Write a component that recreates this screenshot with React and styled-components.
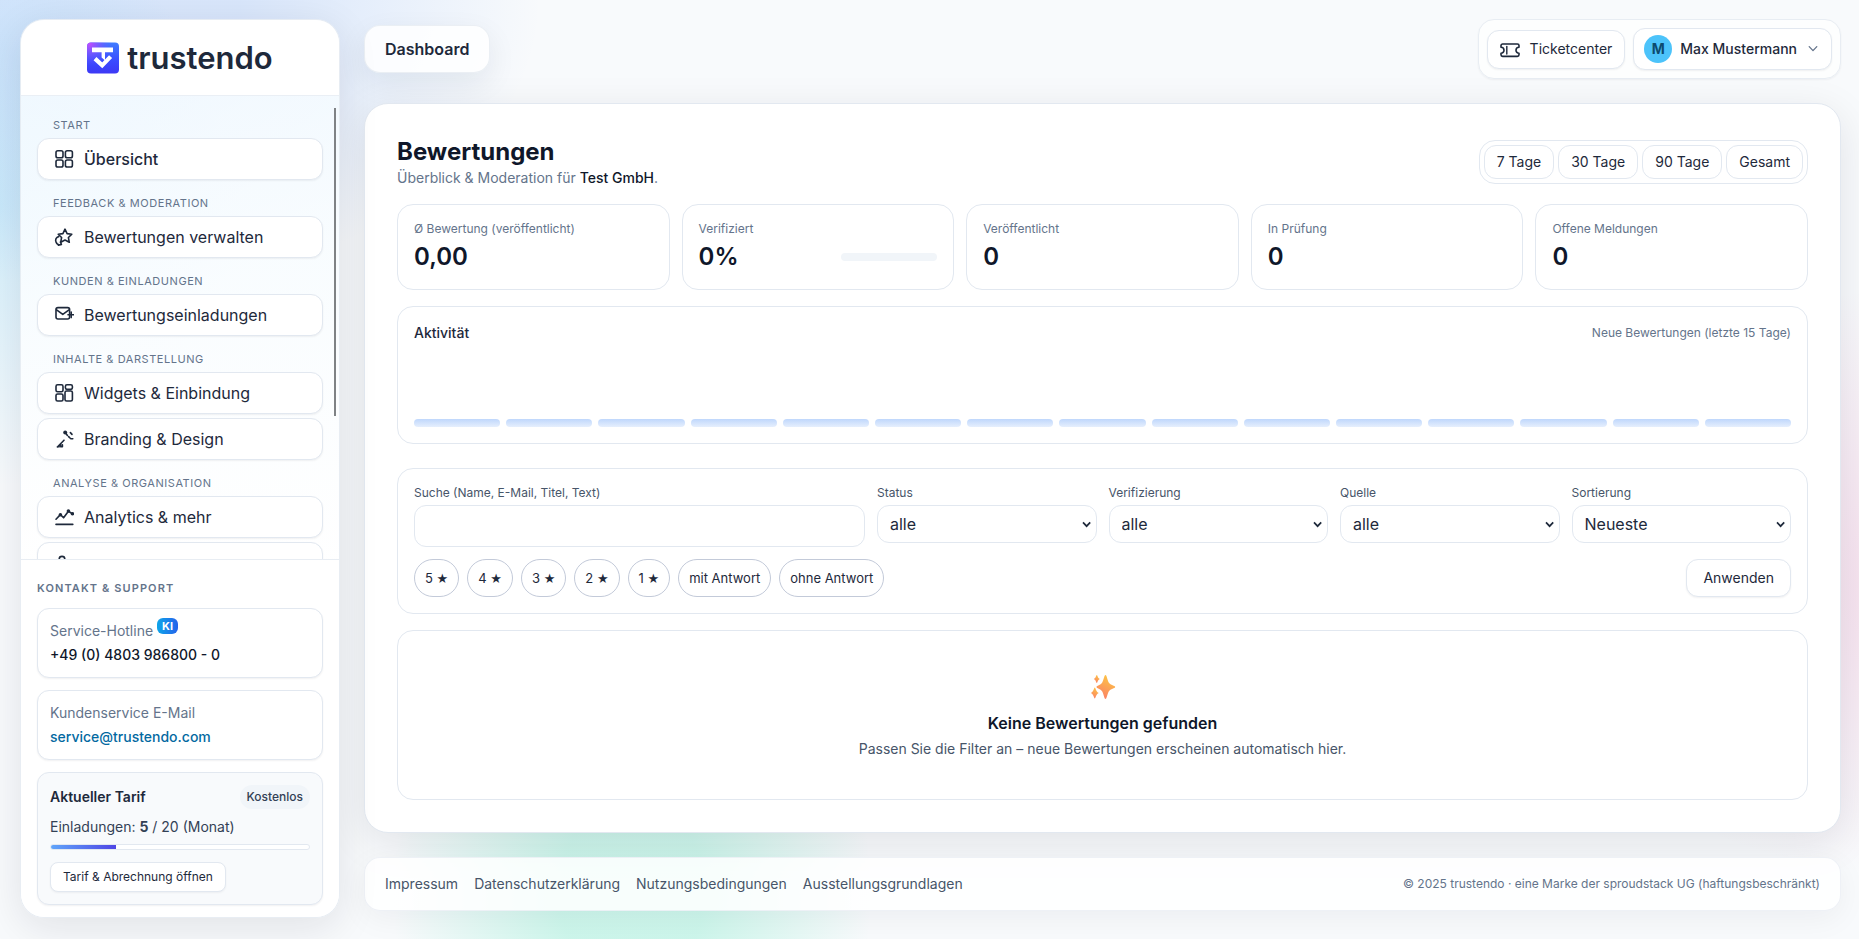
import React from "react";
import styled, { createGlobalStyle } from "styled-components";

const GlobalStyle = createGlobalStyle`
  *, *::before, *::after { box-sizing: border-box; }
  body {
    margin: 0;
    min-height: 100vh;
    font-family: Inter, "Liberation Sans", sans-serif;
    font-size: 14px;
    line-height: 20px;
    color: #1e293b;
    background:
      radial-gradient(ellipse 240px 280px at 0% 22%, rgba(56, 189, 248, 0.2), transparent 100%),
      radial-gradient(ellipse 430px 290px at 6% 0%, rgba(59, 130, 246, 0.17) 30%, transparent 100%),
      radial-gradient(ellipse 240px 310px at 34% 95%, rgba(16, 225, 160, 0.19) 30%, transparent 100%),
      radial-gradient(ellipse 480px 330px at 104% 62%, rgba(236, 72, 153, 0.15), transparent 90%),
      #f8fafc;
    background-attachment: fixed;
  }
  button, input, select { font: inherit; color: inherit; margin: 0; }
  a { color: inherit; text-decoration: none; }
  h1, h2, h3, p, ul { margin: 0; padding: 0; }
`;

const line = "#e2e8f0";

const Shell = styled.div`
  display: grid;
  grid-template-columns: 320px minmax(0, 1fr);
  gap: 24px;
  align-items: start;
  padding: 19px 18px 0 20px;
`;

const Sidebar = styled.aside`
  position: sticky;
  top: 19px;
  display: flex;
  flex-direction: column;
  height: calc(100vh - 40px);
  overflow: hidden;
  border: 1px solid rgba(226, 232, 240, 0.8);
  border-radius: 24px;
  background: rgba(255, 255, 255, 0.72);
  box-shadow: 0 10px 40px rgba(15, 23, 42, 0.1);
`;

const Brand = styled.a`
  display: flex;
  align-items: center;
  justify-content: center;
  gap: 8px;
  flex: none;
  height: 76px;
  border-bottom: 1px solid #eaeff5;
  background: rgba(255, 255, 255, 0.94);
  font-size: 31px;
  line-height: 40px;
  font-weight: 600;
  color: #1e293b;
`;

const NavWrap = styled.div`
  position: relative;
  display: flex;
  flex: 1;
  min-height: 0;
  background: linear-gradient(rgba(240, 249, 255, 0.6), rgba(255, 255, 255, 0.85));
`;

const Nav = styled.nav`
  flex: 1;
  overflow-y: auto;
  scrollbar-width: none;
  padding: 20px 16px;
`;

const ScrollThumb = styled.span`
  position: absolute;
  top: 12px;
  right: 3px;
  width: 2px;
  height: 308px;
  background: #7f8285;
`;

const NavGroup = styled.div`
  display: flex;
  flex-direction: column;
  gap: 4px;
  margin-bottom: 14px;
`;

const NavCaption = styled.h2`
  padding-left: 16px;
  font-size: 11px;
  line-height: 18px;
  font-weight: 400;
  letter-spacing: 0.05em;
  text-transform: uppercase;
  color: #64748b;
`;

const NavItem = styled.a`
  display: flex;
  align-items: center;
  gap: 10px;
  height: 42px;
  flex: none;
  padding: 0 16px;
  border: 1px solid ${line};
  border-radius: 12px;
  background: #fff;
  box-shadow: 0 1px 2px rgba(15, 23, 42, 0.06);
  font-size: 16px;
  line-height: 24px;
  font-weight: ${(p) => (p.$active ? 500 : 400)};
`;

const SideFoot = styled.div`
  display: flex;
  flex-direction: column;
  gap: 12px;
  flex: none;
  padding: 20px 16px 12px;
  border-top: 1px solid #e8edf3;
  background: rgba(255, 255, 255, 0.94);
`;

const FootCaption = styled.h2`
  font-size: 11px;
  line-height: 16px;
  font-weight: 600;
  letter-spacing: 0.1em;
  text-transform: uppercase;
  color: #64748b;
`;

const SideCard = styled.section`
  display: flex;
  flex-direction: column;
  gap: 4px;
  padding: 12px;
  border: 1px solid ${line};
  border-radius: 12px;
  background: ${(p) => (p.$tinted ? "#f8fafc" : "#fff")};
  box-shadow: 0 1px 2px rgba(15, 23, 42, 0.06);
`;

const CardLabel = styled.p`
  color: #64748b;
`;

const CardLink = styled.a`
  font-weight: 500;
  color: ${(p) => (p.$accent ? "#0369a1" : "#0f172a")};
`;

const KiBadge = styled.sup`
  padding: 1px 5px;
  border-radius: 6px;
  background: linear-gradient(90deg, #0ea5e9, #2563eb);
  font-size: 11px;
  line-height: 0;
  font-weight: 700;
  color: #fff;
`;

const PlanHead = styled.div`
  display: flex;
  align-items: center;
  justify-content: space-between;
  height: 24px;
`;

const PlanTitle = styled.h3`
  font-size: 14px;
  font-weight: 600;
`;

const PlanBadge = styled.span`
  padding: 4px 7px;
  border-radius: 12px;
  background: #f1f5f9;
  font-size: 12px;
  line-height: 16px;
  font-weight: 500;
  color: #334155;
`;

const PlanUsage = styled.p`
  padding: 4px 0 3px;
  color: #334155;
`;

const Meter = styled.div`
  height: 6px;
  overflow: hidden;
  border: 1px solid ${line};
  border-radius: 3px;
  background: #fff;
`;

const MeterFill = styled.div`
  height: 100%;
  background: linear-gradient(90deg, #60a5fa, #4f46e5);
`;

const PlanButton = styled.button`
  align-self: flex-start;
  height: 30px;
  margin-top: 8px;
  padding: 0 12px;
  border: 1px solid ${line};
  border-radius: 8px;
  background: #fff;
  box-shadow: 0 1px 2px rgba(15, 23, 42, 0.05);
  font-size: 12px;
`;

const Column = styled.div`
  display: flex;
  flex-direction: column;
  gap: 24px;
  min-width: 0;
`;

const TopBar = styled.header`
  display: flex;
  align-items: center;
  justify-content: space-between;
`;

const PageTag = styled.div`
  padding: 11px 20px;
  border: 1px solid rgba(226, 232, 240, 0.7);
  border-radius: 16px;
  background: rgba(255, 255, 255, 0.85);
  box-shadow: 0 10px 30px rgba(15, 23, 42, 0.07);
  font-size: 16px;
  line-height: 24px;
  font-weight: 600;
`;

const TopActions = styled.div`
  display: flex;
  align-items: center;
  gap: 8px;
  height: 60px;
  padding: 0 8px;
  border: 1px solid #e8edf3;
  border-radius: 16px;
  background: rgba(255, 255, 255, 0.7);
  box-shadow: 0 1px 2px rgba(15, 23, 42, 0.05);
`;

const TopButton = styled.button`
  display: flex;
  align-items: center;
  gap: ${(p) => (p.$user ? 8 : 10)}px;
  height: ${(p) => (p.$user ? 42 : 39)}px;
  padding: 0 ${(p) => (p.$user ? 10 : 12)}px;
  border: 1px solid ${line};
  border-radius: 12px;
  background: #fff;
  box-shadow: 0 1px 2px rgba(15, 23, 42, 0.06);
  font-weight: ${(p) => (p.$user ? 500 : 400)};
`;

const Avatar = styled.span`
  width: 28px;
  height: 28px;
  border-radius: 50%;
  background: #4cc3fa;
  line-height: 28px;
  font-weight: 700;
  text-align: center;
  color: #0c4a6e;
`;

const ChevronBox = styled.span`
  display: flex;
  padding: 0 2px;
`;

const Panel = styled.main`
  padding: 32px;
  border: 1px solid ${line};
  border-radius: 24px;
  background: #fff;
  box-shadow: 0 10px 40px rgba(15, 23, 42, 0.1);
`;

const PanelHead = styled.div`
  display: flex;
  align-items: center;
  justify-content: space-between;
  margin-bottom: 16px;
`;

const Title = styled.h1`
  font-size: 24px;
  line-height: 32px;
  font-weight: 700;
  color: #0f172a;
`;

const Subtitle = styled.p`
  color: #64748b;
  strong { font-weight: 500; color: #0f172a; }
`;

const RangeGroup = styled.div`
  display: flex;
  gap: 4px;
  padding: 4px;
  border: 1px solid ${line};
  border-radius: 16px;
`;

const RangeButton = styled.button`
  height: 34px;
  padding: 0 12px;
  border: 1px solid ${line};
  border-radius: 12px;
  background: #fff;
`;

const Card = styled.section`
  padding: 16px;
  border: 1px solid ${line};
  border-radius: 16px;
  background: #fff;
`;

const KpiGrid = styled.div`
  display: grid;
  grid-template-columns: repeat(5, minmax(0, 1fr));
  gap: 12px;
  margin-bottom: 16px;
`;

const KpiLabel = styled.p`
  margin-bottom: 4px;
  font-size: 12px;
  line-height: 16px;
  color: #64748b;
`;

const KpiRow = styled.div`
  display: flex;
  align-items: center;
  justify-content: space-between;
`;

const KpiValue = styled.p`
  font-size: 24px;
  line-height: 32px;
  font-weight: 600;
  color: #0f172a;
`;

const KpiTrack = styled.div`
  width: 96px;
  height: 8px;
  border-radius: 4px;
  background: #f1f5f9;
`;

const ActivityCard = styled(Card)`
  margin-bottom: 24px;
`;

const ActivityHead = styled.div`
  display: flex;
  align-items: center;
  justify-content: space-between;
  margin-bottom: 12px;
`;

const ActivityTitle = styled.h2`
  font-size: 14px;
  font-weight: 500;
`;

const Hint = styled.span`
  font-size: 12px;
  line-height: 16px;
  color: #64748b;
`;

const Bars = styled.div`
  display: flex;
  align-items: flex-end;
  gap: 6px;
  height: 72px;
`;

const Bar = styled.div`
  flex: 1;
  height: 8px;
  border-radius: 4px;
  background: linear-gradient(#bfd7fc, #e6effd);
`;

const FilterForm = styled.form`
  display: flex;
  flex-direction: column;
  gap: 12px;
  margin-bottom: 16px;
  padding: 16px;
  border: 1px solid ${line};
  border-radius: 16px;
`;

const FieldGrid = styled.div`
  display: grid;
  grid-template-columns: repeat(12, minmax(0, 1fr));
  gap: 12px;
`;

const Field = styled.label`
  display: flex;
  flex-direction: column;
  gap: 4px;
  grid-column: span ${(p) => p.$span};
  font-size: 12px;
  line-height: 16px;
  color: #475569;
`;

const TextInput = styled.input`
  width: 100%;
  height: 42px;
  padding: 8px 12px;
  border: 1px solid ${line};
  border-radius: 12px;
  background: #fff;
  font-size: 16px;
  color: #1e293b;
`;

const SelectBox = styled.span`
  position: relative;
  display: block;
  svg {
    position: absolute;
    top: 13px;
    right: 4px;
    pointer-events: none;
  }
`;

const Select = styled.select`
  appearance: none;
  display: block;
  width: 100%;
  height: 38px;
  padding: 0 20px 0 12px;
  border: 1px solid ${line};
  border-radius: 12px;
  background: #fff;
  font-size: 16px;
  line-height: 24px;
  color: #1e293b;
`;

const ChipRow = styled.div`
  display: flex;
  align-items: center;
  gap: 8px;
`;

const Chip = styled.button`
  height: 38px;
  padding: 0 10px;
  border: 1px solid #c3cad9;
  border-radius: 19px;
  background: #fff;
  font-size: 13px;
`;

const Star = styled.span`
  font-family: "DejaVu Sans", sans-serif;
  font-size: 13px;
  line-height: 1;
`;

const ApplyButton = styled.button`
  height: 38px;
  margin-left: auto;
  padding: 0 16px;
  border: 1px solid ${line};
  border-radius: 12px;
  background: #fff;
  box-shadow: 0 1px 2px rgba(15, 23, 42, 0.06);
`;

const EmptyCard = styled(Card)`
  display: flex;
  flex-direction: column;
  align-items: center;
  padding: 40px 16px;
  text-align: center;
`;

const EmptyTitle = styled.h2`
  margin: 8px 0 4px;
  font-size: 16px;
  line-height: 24px;
  font-weight: 600;
  color: #0f172a;
`;

const EmptyText = styled.p`
  color: #475569;
`;

const Footer = styled.footer`
  display: flex;
  align-items: center;
  justify-content: space-between;
  min-height: 54px;
  padding: 0 20px;
  border: 1px solid rgba(226, 232, 240, 0.6);
  border-radius: 16px;
  background: rgba(255, 255, 255, 0.85);
  box-shadow: 0 8px 30px rgba(15, 23, 42, 0.05);
`;

const FooterLinks = styled.nav`
  display: flex;
  gap: 16px;
  color: #475569;
`;

const Svg = ({ size = 20, children, ...rest }) => (
  <svg
    width={size}
    height={size}
    viewBox="0 0 20 20"
    fill="none"
    stroke="currentColor"
    strokeWidth="1.6"
    strokeLinecap="round"
    strokeLinejoin="round"
    aria-hidden="true"
    {...rest}
  >
    {children}
  </svg>
);

const GridIcon = () => (
  <Svg>
    <rect x="2" y="1.8" width="7" height="7" rx="1.8" />
    <rect x="11.4" y="1.8" width="7" height="7" rx="1.8" />
    <rect x="2" y="11" width="7" height="7" rx="1.8" />
    <rect x="11.4" y="11" width="7" height="7" rx="1.8" />
  </Svg>
);

const StarIcon = () => (
  <Svg>
    <path d="M11 2.2l2.1 4.4 4.7.6-3.4 3.3.9 4.8-4.3-2.3-4.3 2.3.9-4.8L4.2 7.2l4.7-.6z" />
    <path d="M4.600 9.600C2.200 10.200 1 12.600 2 15c.9 2.200 3 3.200 5.200 2.400M4.400 18.200l3-.8-1-2.400" />
  </Svg>
);

const MailIcon = () => (
  <Svg>
    <rect x="2" y="2.600" width="13.600" height="11.400" rx="2" />
    <path d="M2.600 4.800l6.200 4.600L15 4.800M14 9.800h6M17.200 7v5.600" />
  </Svg>
);

const WidgetIcon = () => (
  <Svg>
    <rect x="2" y="1.800" width="7" height="7" rx="1.600" />
    <rect x="11.400" y="1.800" width="7" height="4.600" rx="1.600" />
    <rect x="2" y="11" width="7" height="7" rx="1.600" />
    <rect x="11" y="8" width="7.400" height="10" rx="1.600" />
  </Svg>
);

const BrandingIcon = () => (
  <Svg>
    <circle cx="11.200" cy="3.400" r="2" fill="currentColor" stroke="none" />
    <path d="M3.400 18l6.600-6.800M3.400 17.800h1.800M6.600 15.200v2.600h1.800v-2M12 4.600l1.400 1.800M14.600 7.600l1.400 1.400M16.400 3.600l1.600 1.800M16.800 9.800h2" />
  </Svg>
);

const ChartIcon = () => (
  <Svg>
    <path d="M2 12.200l4.400-4.600 3.200 3.200 4.800-6.600 3.800 2.400M2 17.400h16.800" />
    <circle cx="6.400" cy="7.800" r="1" fill="currentColor" />
    <circle cx="14.400" cy="4" r="1" fill="currentColor" />
    <circle cx="18.400" cy="6.800" r="1" fill="currentColor" />
  </Svg>
);

const TeamIcon = () => (
  <Svg>
    <circle cx="8" cy="6.200" r="2.800" />
    <path d="M2.400 17.600c0-3.600 2.400-5.600 5.600-5.600s5.600 2 5.600 5.600" />
  </Svg>
);

const TicketIcon = () => (
  <Svg>
    <path d="M2.600 5h14.800a1.600 1.600 0 0 1 1.600 1.600v1.600a3 3 0 0 0 0 6v1.600a1.600 1.600 0 0 1-1.600 1.600H2.600A1.600 1.600 0 0 1 1 15.800v-1.600a3 3 0 0 0 0-6V6.600A1.600 1.600 0 0 1 2.600 5z" />
    <path d="M6.800 7.400v7.600" strokeWidth="1.400" />
  </Svg>
);

const Chevron = () => (
  <svg width="12" height="12" viewBox="0 0 12 12" fill="none" stroke="#64748b" strokeWidth="1.3" strokeLinecap="round" strokeLinejoin="round" aria-hidden="true">
    <path d="M2.200 3.600L6 7.600l3.800-4" />
  </svg>
);

const SelectArrow = () => (
  <svg width="12" height="12" viewBox="0 0 12 12" fill="none" stroke="#1e293b" strokeWidth="1.7" aria-hidden="true">
    <path d="M2 4.400l3.600 3.800 3.600-3.800" />
  </svg>
);

const LogoMark = () => (
  <svg width="32" height="32" viewBox="0 0 32 32" aria-hidden="true">
    <defs>
      <linearGradient id="logoBase" x1="0" y1="0" x2="0" y2="1">
        <stop offset="0" stopColor="#3f7dff" />
        <stop offset="0.6" stopColor="#3b4bff" />
        <stop offset="1" stopColor="#3d38f5" />
      </linearGradient>
      <radialGradient id="logoGlow" cx="0.080" cy="0.050" r="0.700">
        <stop offset="0" stopColor="#c04dff" />
        <stop offset="1" stopColor="#6a4dff" stopOpacity="0" />
      </radialGradient>
    </defs>
    <rect y="0.500" width="32" height="31" rx="4" fill="url(#logoBase)" />
    <rect y="0.500" width="32" height="31" rx="4" fill="url(#logoGlow)" />
    <path d="M5 5.600h21v4.600h-8v8.400l-3.400-3.200v-5.200H5z" fill="#fff" />
    <path d="M8 16.600l7.200 6.800 8.400-8.800" fill="none" stroke="#fff" strokeWidth="4.200" />
  </svg>
);

const Sparkles = () => (
  <svg width="32" height="32" viewBox="-3 -3 32 32" aria-hidden="true">
    <defs>
      <linearGradient id="spark" x1="0.700" y1="0" x2="0.300" y2="1">
        <stop offset="0" stopColor="#fdc743" />
        <stop offset="1" stopColor="#fb7f68" />
      </linearGradient>
    </defs>
    <g fill="url(#spark)">
      <path d="M15.500 1c1.200 0 1.900 5.200 3.400 7.800 1.400 2.300 6.300 2.900 6.300 4.200s-4.900 1.900-6.300 4.200c-1.500 2.600-2.200 7.800-3.400 7.800s-1.900-5.200-3.400-7.800C10.700 14.900 6.500 14.300 6.500 13s4.200-1.900 5.600-4.200C13.600 6.200 14.300 1 15.500 1z" />
      <path d="M6.800 1c.7 0 .9 3.200 3 4-2.100.8-2.300 4-3 4s-.9-3.200-3-4c2.100-.8 2.300-4 3-4z" />
      <path d="M4.800 13.500c.8 0 1.200 4.600 4 5.500-2.800.9-3.200 5.500-4 5.500s-1.200-4.600-4-5.500c2.800-.9 3.200-5.500 4-5.500z" />
    </g>
  </svg>
);

const navGroups = [
  { title: "Start", items: [["Übersicht", GridIcon, true]] },
  { title: "Feedback & Moderation", items: [["Bewertungen verwalten", StarIcon]] },
  { title: "Kunden & Einladungen", items: [["Bewertungseinladungen", MailIcon]] },
  { title: "Inhalte & Darstellung", items: [["Widgets & Einbindung", WidgetIcon], ["Branding & Design", BrandingIcon]] },
  { title: "Analyse & Organisation", items: [["Analytics & mehr", ChartIcon], ["", TeamIcon]] },
];

const kpis = [
  ["Ø Bewertung (veröffentlicht)", "0,00"],
  ["Verifiziert", "0%", true],
  ["Veröffentlicht", "0"],
  ["In Prüfung", "0"],
  ["Offene Meldungen", "0"],
];

const selects = [
  ["Status", "alle"],
  ["Verifizierung", "alle"],
  ["Quelle", "alle"],
  ["Sortierung", "Neueste"],
];

const ratings = [5, 4, 3, 2, 1];
const replies = ["mit Antwort", "ohne Antwort"];
const ranges = ["7 Tage", "30 Tage", "90 Tage", "Gesamt"];
const legal = ["Impressum", "Datenschutzerklärung", "Nutzungsbedingungen", "Ausstellungsgrundlagen"];
const usage = { used: 5, limit: 20 };

export default function App() {
  return (
    <>
      <GlobalStyle />
      <Shell>
        <Sidebar>
          <Brand href="#">
            <LogoMark />
            trustendo
          </Brand>
          <NavWrap>
            <Nav aria-label="Hauptmenü">
              {navGroups.map((group) => (
                <NavGroup key={group.title}>
                  <NavCaption>{group.title}</NavCaption>
                  {group.items.map(([label, Icon, active]) => (
                    <NavItem key={label} href="#" $active={active}>
                      <Icon />
                      {label}
                    </NavItem>
                  ))}
                </NavGroup>
              ))}
            </Nav>
            <ScrollThumb />
          </NavWrap>
          <SideFoot>
            <FootCaption>Kontakt &amp; Support</FootCaption>
            <SideCard>
              <CardLabel>
                Service-Hotline <KiBadge>KI</KiBadge>
              </CardLabel>
              <CardLink href="tel:+4948039868000">+49 (0) 4803 986800 - 0</CardLink>
            </SideCard>
            <SideCard>
              <CardLabel>Kundenservice E-Mail</CardLabel>
              <CardLink $accent href="mailto:service@trustendo.com">service@trustendo.com</CardLink>
            </SideCard>
            <SideCard $tinted>
              <PlanHead>
                <PlanTitle>Aktueller Tarif</PlanTitle>
                <PlanBadge>Kostenlos</PlanBadge>
              </PlanHead>
              <PlanUsage>
                Einladungen: <strong>{usage.used}</strong> / {usage.limit} (Monat)
              </PlanUsage>
              <Meter>
                <MeterFill style={{ width: `${(usage.used / usage.limit) * 100}%` }} />
              </Meter>
              <PlanButton type="button">Tarif &amp; Abrechnung öffnen</PlanButton>
            </SideCard>
          </SideFoot>
        </Sidebar>

        <Column>
          <TopBar>
            <PageTag>Dashboard</PageTag>
            <TopActions>
              <TopButton type="button">
                <TicketIcon />
                Ticketcenter
              </TopButton>
              <TopButton type="button" $user>
                <Avatar>M</Avatar>
                Max Mustermann
                <ChevronBox>
                  <Chevron />
                </ChevronBox>
              </TopButton>
            </TopActions>
          </TopBar>

          <Panel>
            <PanelHead>
              <div>
                <Title>Bewertungen</Title>
                <Subtitle>
                  Überblick &amp; Moderation für <strong>Test GmbH</strong>.
                </Subtitle>
              </div>
              <RangeGroup>
                {ranges.map((range) => (
                  <RangeButton key={range} type="button">{range}</RangeButton>
                ))}
              </RangeGroup>
            </PanelHead>

            <KpiGrid>
              {kpis.map(([label, value, track]) => (
                <Card key={label}>
                  <KpiLabel>{label}</KpiLabel>
                  <KpiRow>
                    <KpiValue>{value}</KpiValue>
                    {track && <KpiTrack />}
                  </KpiRow>
                </Card>
              ))}
            </KpiGrid>

            <ActivityCard>
              <ActivityHead>
                <ActivityTitle>Aktivität</ActivityTitle>
                <Hint>Neue Bewertungen (letzte 15 Tage)</Hint>
              </ActivityHead>
              <Bars>
                {Array.from({ length: 15 }, (_, day) => (
                  <Bar key={day} />
                ))}
              </Bars>
            </ActivityCard>

            <FilterForm onSubmit={(e) => e.preventDefault()}>
              <FieldGrid>
                <Field $span={4}>
                  Suche (Name, E-Mail, Titel, Text)
                  <TextInput type="text" name="q" />
                </Field>
                {selects.map(([label, value]) => (
                  <Field key={label} $span={2}>
                    {label}
                    <SelectBox>
                      <Select name={label} defaultValue={value}>
                        <option>{value}</option>
                      </Select>
                      <SelectArrow />
                    </SelectBox>
                  </Field>
                ))}
              </FieldGrid>
              <ChipRow>
                {ratings.map((rating) => (
                  <Chip key={rating} type="button">
                    {rating} <Star>★</Star>
                  </Chip>
                ))}
                {replies.map((reply) => (
                  <Chip key={reply} type="button">{reply}</Chip>
                ))}
                <ApplyButton type="submit">Anwenden</ApplyButton>
              </ChipRow>
            </FilterForm>

            <EmptyCard>
              <Sparkles />
              <EmptyTitle>Keine Bewertungen gefunden</EmptyTitle>
              <EmptyText>Passen Sie die Filter an – neue Bewertungen erscheinen automatisch hier.</EmptyText>
            </EmptyCard>
          </Panel>

          <Footer>
            <FooterLinks aria-label="Rechtliches">
              {legal.map((label) => (
                <a key={label} href="#">{label}</a>
              ))}
            </FooterLinks>
            <Hint>© 2025 trustendo · eine Marke der sproudstack UG (haftungsbeschränkt)</Hint>
          </Footer>
        </Column>
      </Shell>
    </>
  );
}
